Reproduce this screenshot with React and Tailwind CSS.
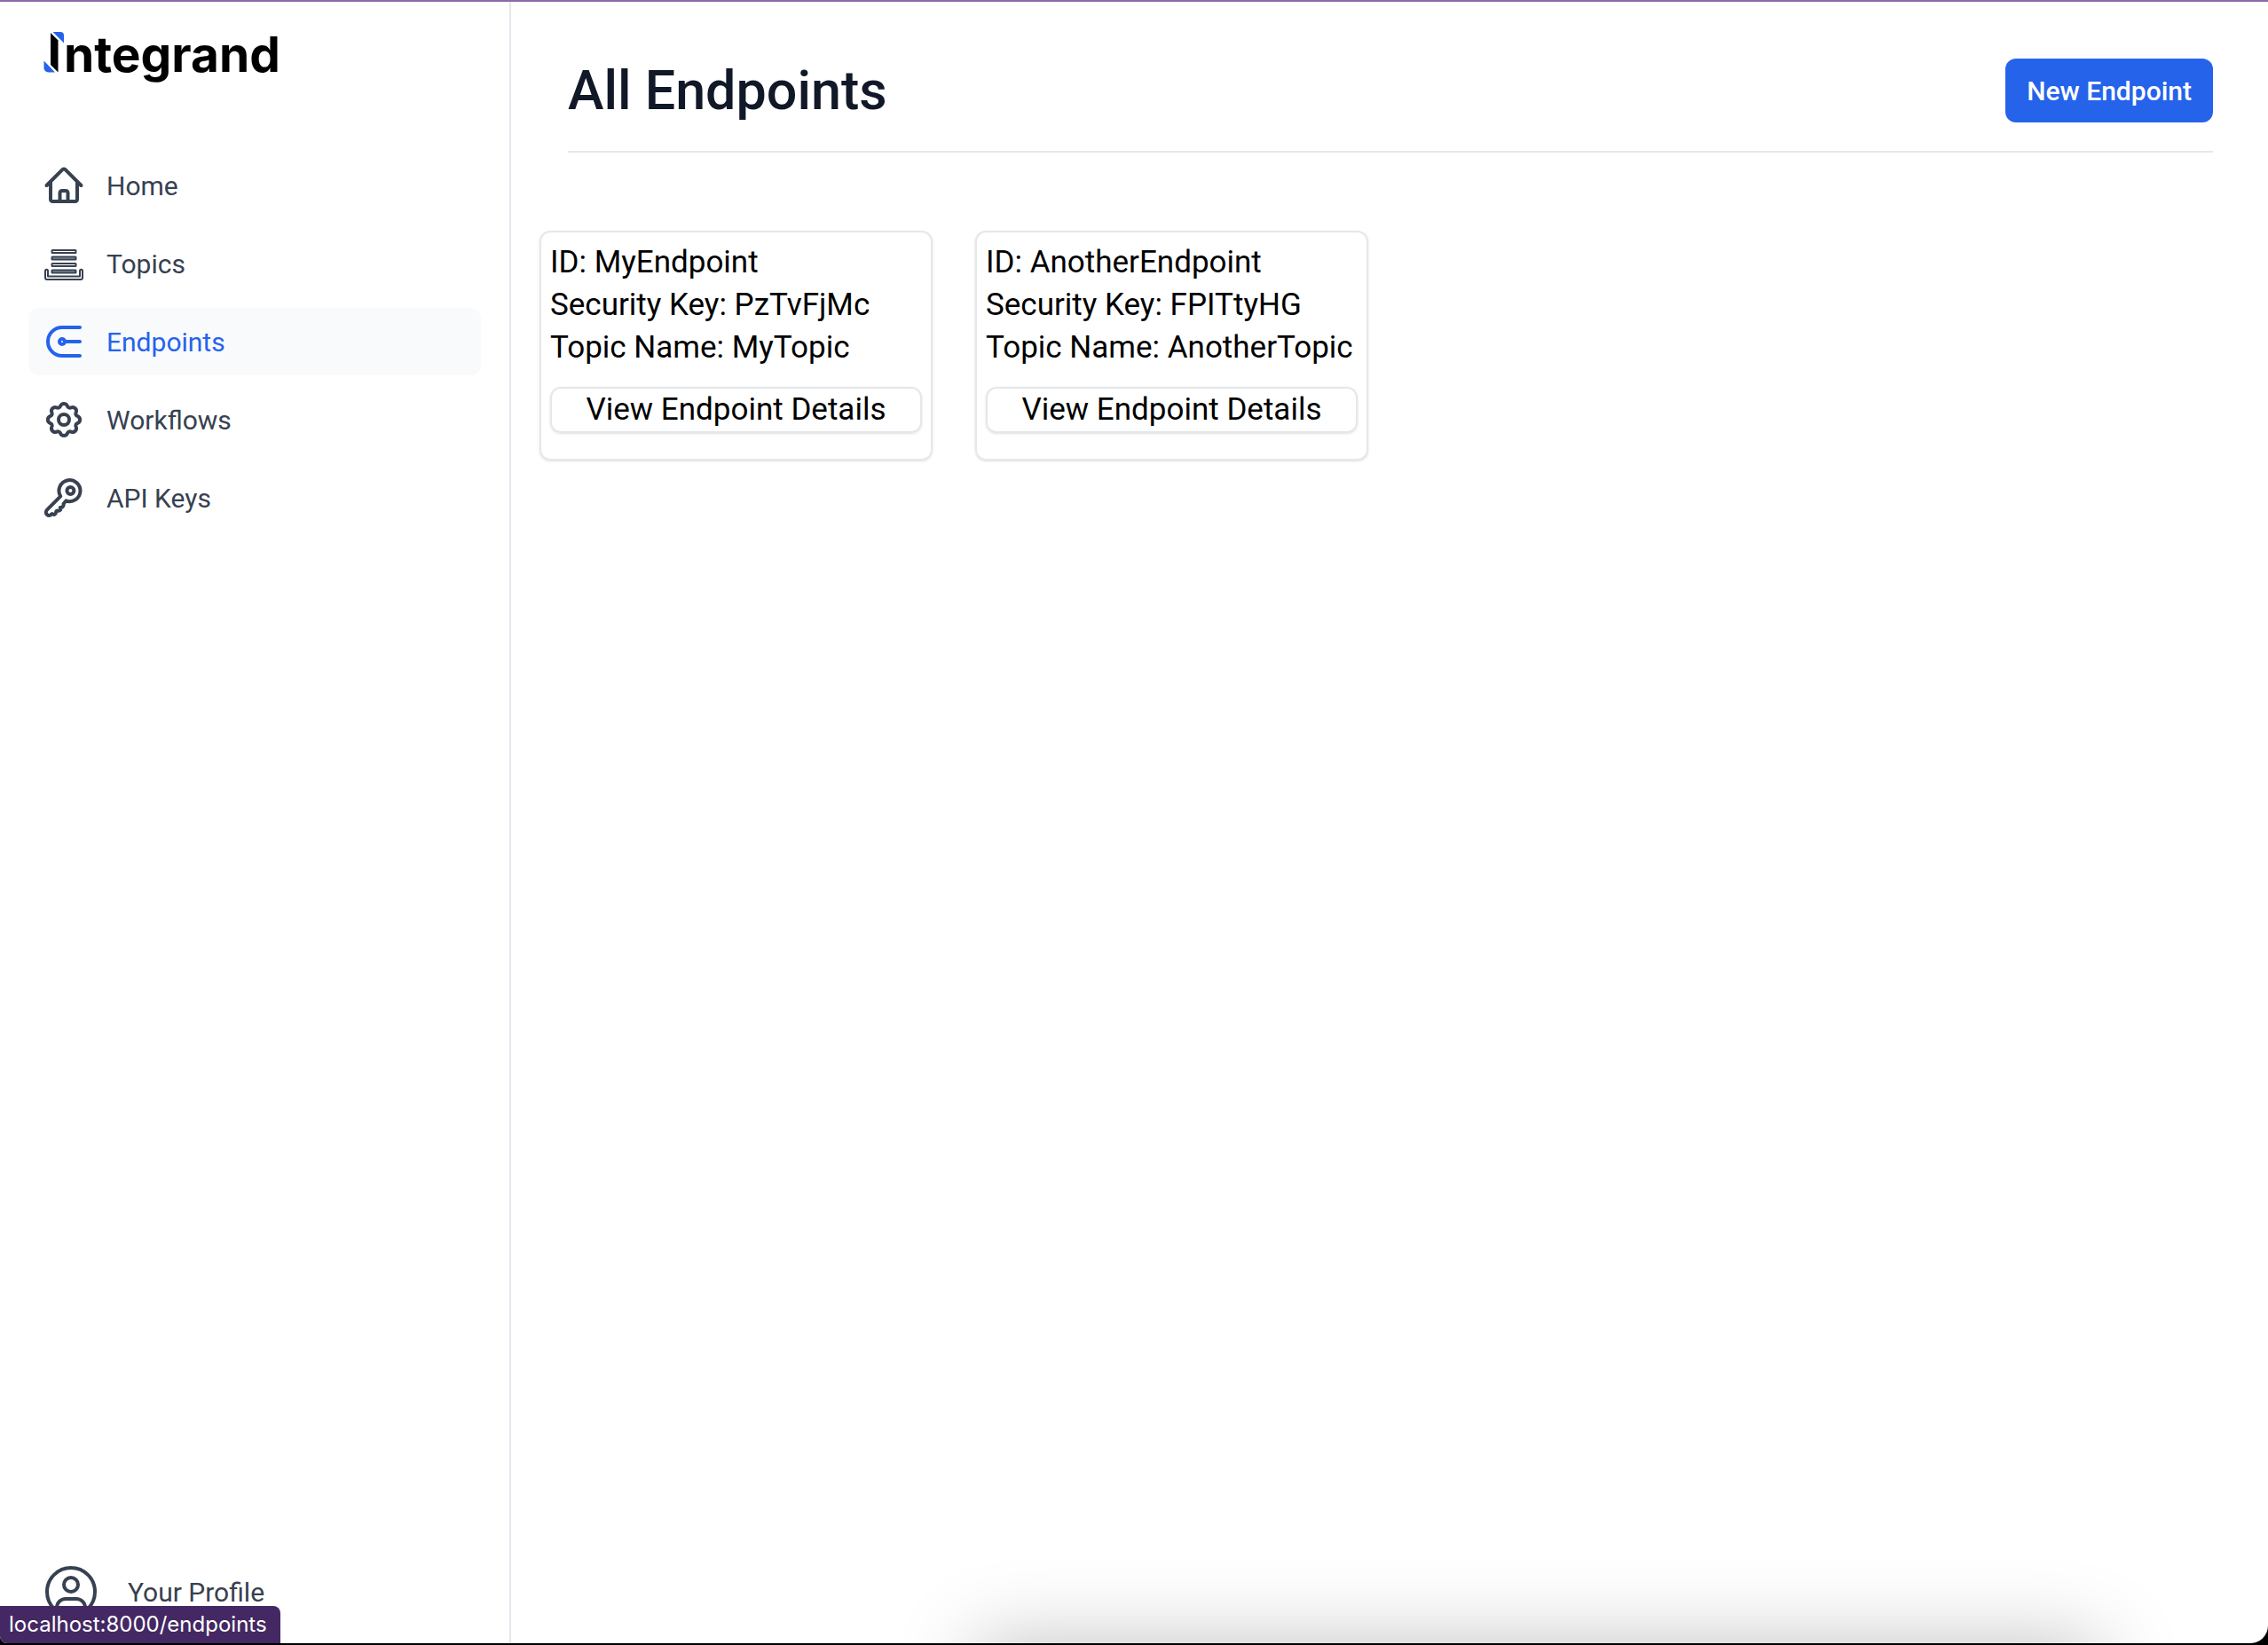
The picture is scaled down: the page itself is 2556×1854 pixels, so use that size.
function Icon({ children, strokeWidth = 4 }) {
  return (
    <svg
      viewBox="0 0 48 48"
      className="size-12 shrink-0"
      fill="none"
      stroke="currentColor"
      strokeWidth={strokeWidth}
      strokeLinecap="round"
      strokeLinejoin="round"
      aria-hidden="true"
    >
      {children}
    </svg>
  );
}

function HomeIcon() {
  return (
    <Icon>
      <path d="M4.5 24 22.4 6.1a2.25 2.25 0 0 1 3.2 0L43.5 24M9 20v19.75A2.25 2.25 0 0 0 11.25 42h8.25v-9.75A2.25 2.25 0 0 1 21.75 30h4.5a2.25 2.25 0 0 1 2.25 2.25V42h8.25A2.25 2.25 0 0 0 39 39.75V20M17 42h15" />
    </Icon>
  );
}

function TopicsIcon() {
  return (
    <Icon strokeWidth={2}>
      <rect x="10.5" y="9" width="27" height="3" rx="0.5" />
      <rect x="10.5" y="16.500" width="27" height="3" rx="0.5" fill="#9ca3af" />
      <rect x="10.5" y="24" width="27" height="3" rx="0.5" />
      <rect x="10.5" y="31.500" width="27" height="3" rx="0.5" fill="#9ca3af" />
      <path d="M3 32.2a1.5 1.5 0 0 1 3 0V38.5H42V32.2a1.5 1.5 0 0 1 3 0V40a2 2 0 0 1-2 2H5a2 2 0 0 1-2-2Z" />
    </Icon>
  );
}

function EndpointsIcon() {
  return (
    <Icon>
      <path d="M42 8H22a16 16 0 0 0 0 32H42M26 24H42" />
      <circle cx="22" cy="24" r="3" />
    </Icon>
  );
}

const gearPath = (() => {
  const point = (deg, r) => {
    const a = (deg * Math.PI) / 180;
    return `${(24 + r * Math.sin(a)).toFixed(2)} ${(24 - r * Math.cos(a)).toFixed(2)}`;
  };
  let d = `M${point(-14, 16)}`;
  for (let k = 0; k < 8; k += 1) {
    const c = k * 45;
    d += `A4.2 4.2 0 0 1 ${point(c + 14, 16)}A3 3 0 0 0 ${point(c + 31, 16)}`;
  }
  return `${d}Z`;
})();

function WorkflowsIcon() {
  return (
    <Icon>
      <path d={gearPath} />
      <circle cx="24" cy="24" r="6" />
    </Icon>
  );
}

function KeyIcon() {
  return (
    <Icon>
      <path d="M20.2 22.3 5.2 37.3C3.4 39.2 3.4 41.6 5 43C6.8 44.7 8.6 44.2 10.8 42C12.4 43.6 15 43 15.2 40.2C15 39 16.4 38.2 17.6 38.8C20 38.8 20.8 37.2 19.8 35C22 35.2 24.2 33.6 23.6 30.8L26.4 27.4A12 12 0 1 0 20.2 22.3Z" />
      <circle cx="31.4" cy="16" r="4" />
    </Icon>
  );
}

function ProfileIcon() {
  return (
    <svg
      viewBox="0 0 64 64"
      className="size-16 shrink-0"
      fill="none"
      stroke="currentColor"
      strokeWidth="4"
      strokeLinecap="round"
      aria-hidden="true"
    >
      <circle cx="32" cy="32" r="27" />
      <circle cx="32" cy="24" r="8" />
      <path d="M16 53V50a10 10 0 0 1 10-10h12a10 10 0 0 1 10 10v3" />
    </svg>
  );
}

function Logo() {
  return (
    <a href="/" aria-label="Integrand" className="flex h-16 items-start px-4">
      <svg viewBox="0 0 24 48" className="h-12 w-6 shrink-0" aria-hidden="true">
        <path d="M9 1 17.5 9.5V45.5L9 37Z" fill="#000" />
        <path d="M11.5 0H20a4 4 0 0 1 4 4V12.5Z" fill="#2563eb" />
        <path d="M1.5 32.5 14 45.5H6.5A5 5 0 0 1 1.5 40.5Z" fill="#2563eb" />
      </svg>
      <span className="text-[55px] leading-[50px] font-bold text-black">ntegrand</span>
    </a>
  );
}

const navItems = [
  { label: "Home", href: "/", icon: HomeIcon },
  { label: "Topics", href: "/topics", icon: TopicsIcon },
  { label: "Endpoints", href: "/endpoints", icon: EndpointsIcon, active: true },
  { label: "Workflows", href: "/workflows", icon: WorkflowsIcon },
  { label: "API Keys", href: "/api-keys", icon: KeyIcon },
];

const endpoints = [
  { id: "MyEndpoint", securityKey: "PzTvFjMc", topic: "MyTopic" },
  { id: "AnotherEndpoint", securityKey: "FPITtyHG", topic: "AnotherTopic" },
];

function Sidebar() {
  return (
    <aside className="flex w-[576px] shrink-0 flex-col border-r-2 border-[#e5e7eb] px-8 pt-[34px] font-['Inter',sans-serif]">
      <Logo />
      <nav className="mt-[71px] flex flex-col gap-3 font-['Roboto',sans-serif]">
        {navItems.map(({ label, href, icon: NavIcon, active }) => (
          <a
            key={label}
            href={href}
            aria-current={active ? "page" : undefined}
            className={
              active
                ? "flex h-[76px] items-center gap-6 rounded-xl bg-[#f9fafc] px-4 text-[30px] text-[#2563eb]"
                : "flex h-[76px] items-center gap-6 rounded-xl px-4 text-[30px] text-[#374151]"
            }
          >
            <NavIcon />
            {label}
          </a>
        ))}
      </nav>
      <a
        href="/profile"
        className="mt-auto mb-[26px] flex items-center gap-8 px-4 font-['Roboto',sans-serif] text-[30px] text-[#374151]"
      >
        <ProfileIcon />
        Your Profile
      </a>
    </aside>
  );
}

function EndpointCard({ id, securityKey, topic }) {
  return (
    <article className="w-[443px] rounded-xl border-2 border-[#e5e7eb] px-[10px] pt-[10px] pb-[29px] text-[35px] leading-[48px] text-black shadow-sm">
      <p>ID: {id}</p>
      <p>Security Key: {securityKey}</p>
      <p>Topic Name: {topic}</p>
      <button type="button" className="mt-5 block w-full rounded-xl border-2 border-[#e5e7eb] shadow-sm">
        View Endpoint Details
      </button>
    </article>
  );
}

export default function App() {
  return (
    <div className="flex min-h-screen flex-col border-y-2 border-t-[#8a6aa8] border-b-black bg-black font-['Roboto',sans-serif]">
      <div className="relative flex grow overflow-hidden rounded-br-[20px] rounded-bl-lg bg-white">
        <Sidebar />
        <main className="grow pr-[62px] pl-8">
          <header className="ml-8 flex items-center justify-between border-b-2 border-[#e5e7eb] pt-16 pb-8">
            <h1 className="text-[61px] leading-[72px] font-medium text-[#111827]">All Endpoints</h1>
            <button type="button" className="h-[72px] rounded-xl bg-[#2563eb] px-6 text-[30px] font-medium text-white">
              New Endpoint
            </button>
          </header>
          <section className="mt-[88px] flex flex-wrap gap-12" aria-label="Endpoints">
            {endpoints.map((endpoint) => (
              <EndpointCard key={endpoint.id} {...endpoint} />
            ))}
          </section>
        </main>
        <div className="absolute top-full right-[190px] left-[1100px] h-24 shadow-[0_0_90px_rgba(0,0,0,0.25)]" />
        <div className="absolute bottom-0 left-0 rounded-tr-lg bg-[#442863] pr-[15px] pl-[10px] font-['Inter',sans-serif] text-[24px] leading-[42px] text-white">
          localhost:8000/endpoints
        </div>
      </div>
    </div>
  );
}
